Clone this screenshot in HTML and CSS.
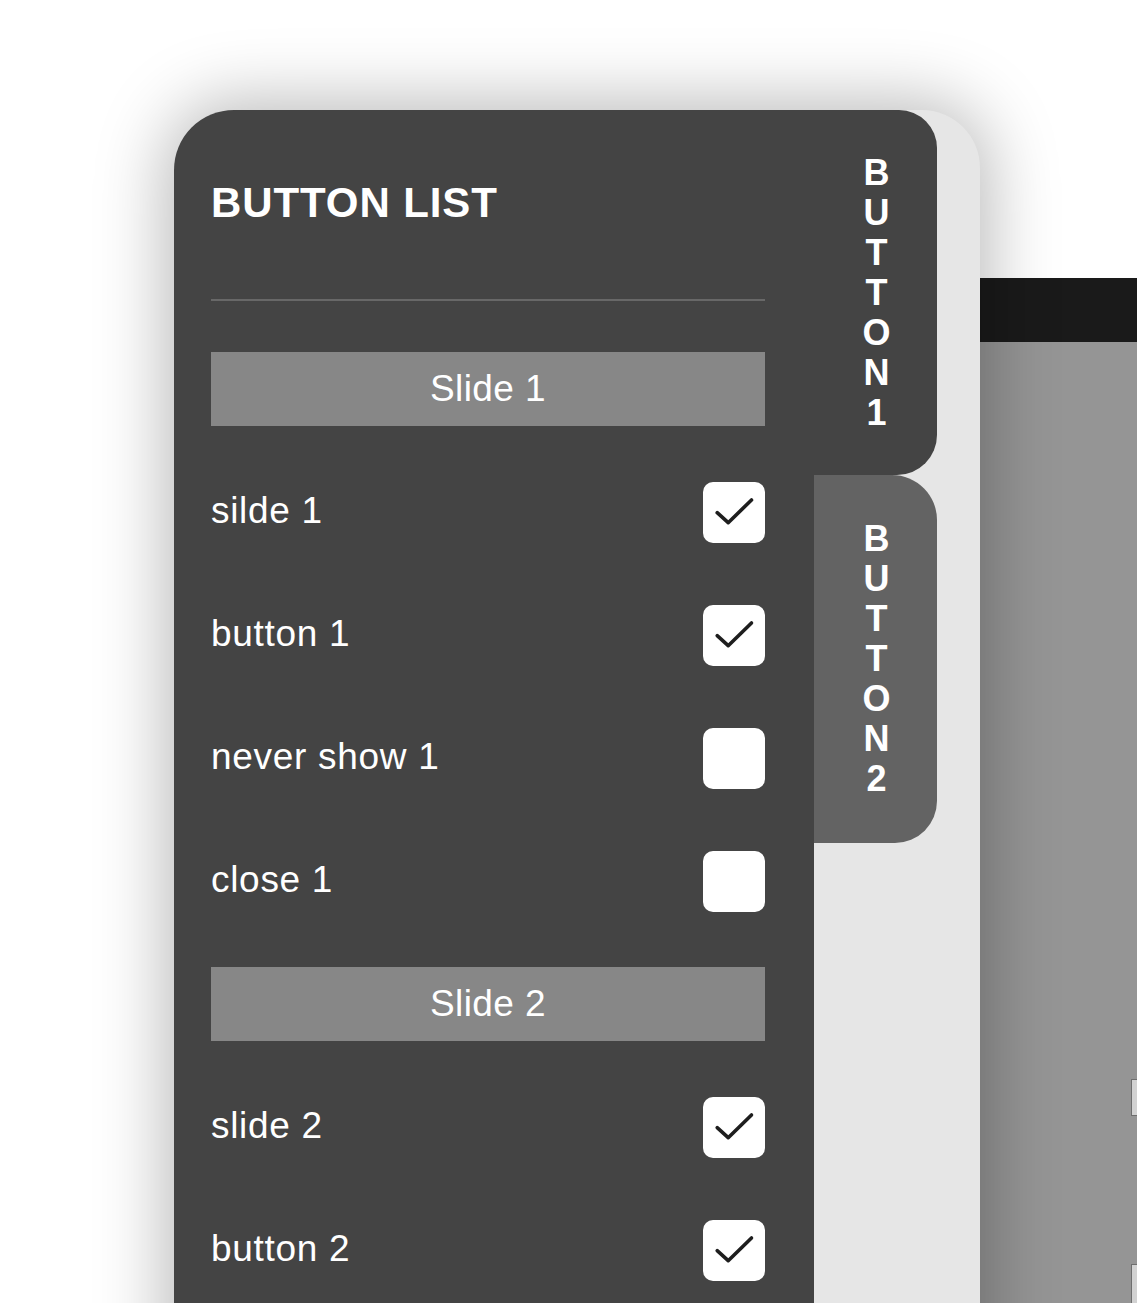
FILE: index.html
```html
<!DOCTYPE html>
<html lang="en">
<head>
<meta charset="utf-8">
<title>Button List</title>
<link rel="stylesheet" href="styles.css">
</head>
<body>
<div class="stage">
  <div class="card">
    <div class="panel">
      <h1 class="title">BUTTON LIST</h1>
      <div class="divider"></div>

      <section class="section">
        <div class="section-head">Slide 1</div>
        <div class="rows">
          <div class="row"><span class="label">silde 1</span>
            <span class="check on"><svg viewBox="0 0 61 61"><path d="M13.7 30.7 L24.7 40.7 L48 18"/></svg></span></div>
          <div class="row"><span class="label">button 1</span>
            <span class="check on"><svg viewBox="0 0 61 61"><path d="M13.7 30.7 L24.7 40.7 L48 18"/></svg></span></div>
          <div class="row"><span class="label">never show 1</span>
            <span class="check"></span></div>
          <div class="row"><span class="label">close 1</span>
            <span class="check"></span></div>
        </div>
      </section>

      <section class="section">
        <div class="section-head">Slide 2</div>
        <div class="rows">
          <div class="row"><span class="label">slide 2</span>
            <span class="check on"><svg viewBox="0 0 61 61"><path d="M13.7 30.7 L24.7 40.7 L48 18"/></svg></span></div>
          <div class="row"><span class="label">button 2</span>
            <span class="check on"><svg viewBox="0 0 61 61"><path d="M13.7 30.7 L24.7 40.7 L48 18"/></svg></span></div>
        </div>
      </section>
    </div>

    <div class="tabs">
      <div class="tab tab-active">
        <div class="tab-text"><span>B</span><span>U</span><span>T</span><span>T</span><span>O</span><span>N</span><span>1</span></div>
      </div>
      <div class="tab tab-idle">
        <div class="tab-text"><span>B</span><span>U</span><span>T</span><span>T</span><span>O</span><span>N</span><span>2</span></div>
      </div>
    </div>
  </div>

  <div class="page">
    <div class="page-bar"></div>
    <div class="page-body">
      <div class="edge-item first"></div>
      <div class="edge-item second"></div>
    </div>
  </div>
</div>
</body>
</html>
```

FILE: styles.css
```css
html, body {
  margin: 0;
  padding: 0;
  height: 1303px;
  overflow: hidden;
  background: #ffffff;
  font-family: "Liberation Sans", Arial, sans-serif;
}

.stage {
  display: flex;
  align-items: flex-start;
  padding: 110px 0 0 174px;
  height: 1303px;
  box-sizing: border-box;
}

.card {
  position: relative;
  z-index: 1;
  display: flex;
  width: 806px;
  height: 1300px;
  flex-shrink: 0;
  background: #e6e6e6;
  border-radius: 60px 58px 0 0;
  box-shadow: 0 0 70px 8px rgba(0, 0, 0, 0.28);
}

.panel {
  width: 640px;
  box-sizing: border-box;
  background: #444444;
  border-top-left-radius: 60px;
  padding: 72px 49px 0 37px;
  color: #ffffff;
}

.title {
  margin: 0;
  font-size: 42px;
  line-height: 42px;
  font-weight: 700;
  letter-spacing: 0.9px;
  color: #ffffff;
}

.divider {
  height: 2px;
  margin-top: 75px;
  background: #686868;
}

.section {
  margin-top: 55px;
}

.divider + .section {
  margin-top: 51px;
}

.section-head {
  height: 74px;
  display: flex;
  align-items: center;
  justify-content: center;
  background: #878787;
  font-size: 37px;
  letter-spacing: 0.4px;
  color: #ffffff;
}

.rows {
  margin-top: 56px;
  display: flex;
  flex-direction: column;
  gap: 62px;
}

.row {
  height: 61px;
  display: flex;
  align-items: center;
  justify-content: space-between;
}

.label {
  font-size: 37px;
  letter-spacing: 0.7px;
  color: #ffffff;
  padding-bottom: 3px;
}

.check {
  width: 62px;
  height: 61px;
  border-radius: 10px;
  background: #ffffff;
  display: block;
}

.check svg {
  width: 62px;
  height: 61px;
  display: block;
}

.check svg path {
  fill: none;
  stroke: #1e1e1e;
  stroke-width: 3.6;
  stroke-linecap: round;
  stroke-linejoin: round;
}

.tabs {
  width: 123px;
  display: flex;
  flex-direction: column;
}

.tab {
  display: flex;
  align-items: center;
  justify-content: center;
  color: #ffffff;
}

.tab-active {
  height: 365px;
  background: #444444;
  border-radius: 0 38px 40px 0;
}

.tab-idle {
  height: 368px;
  background: #636363;
  border-radius: 0 45px 42px 0;
}

.tab-text {
  display: flex;
  flex-direction: column;
  align-items: center;
  font-size: 36px;
  font-weight: 700;
  line-height: 40px;
  padding-left: 2px;
}

.page {
  flex: 1;
  margin-top: 168px;
  align-self: stretch;
  display: flex;
  flex-direction: column;
  overflow: hidden;
}

.page-bar {
  height: 64px;
  flex-shrink: 0;
  background: #1a1a1a;
}

.page-body {
  flex: 1;
  background: #959595;
  display: flex;
  flex-direction: column;
  align-items: flex-end;
}

.edge-item {
  width: 6px;
  flex-shrink: 0;
  box-sizing: border-box;
  background: #d2d2d2;
  border: 1px solid #6e6e6e;
  border-right: none;
}

.edge-item.first {
  height: 37px;
  margin-top: 737px;
}

.edge-item.second {
  height: 60px;
  margin-top: 148px;
}
```
